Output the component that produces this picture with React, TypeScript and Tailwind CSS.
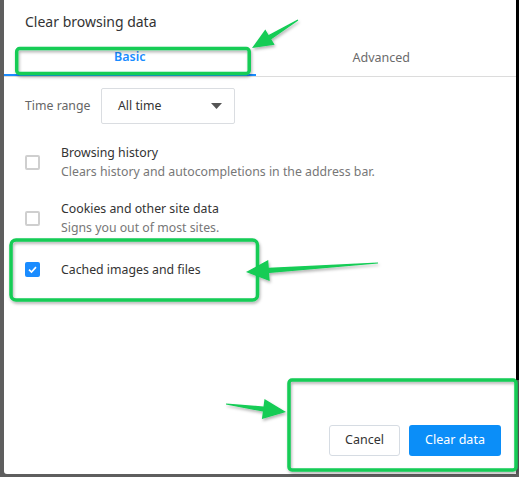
import React from 'react'

const FONT = { fontFamily: '"Noto Sans", "Open Sans", Arial, sans-serif' }
const GREEN = '#12cc55'

type Pt = [number, number]

// tapered arrow: thin tail widening into a triangle head
function arrowPoints(tail: Pt, tip: Pt, headLen: number, headHalf: number) {
  const dx = tip[0] - tail[0]
  const dy = tip[1] - tail[1]
  const len = Math.hypot(dx, dy)
  const ux = dx / len
  const uy = dy / len
  const nx = -uy
  const ny = ux
  const bx = tip[0] - ux * headLen
  const by = tip[1] - uy * headLen
  const pts: Pt[] = [
    [tail[0] + nx * 0.6, tail[1] + ny * 0.6],
    [bx + nx * 2.6, by + ny * 2.6],
    [bx + nx * headHalf, by + ny * headHalf],
    tip,
    [bx - nx * headHalf, by - ny * headHalf],
    [bx - nx * 2.6, by - ny * 2.6],
    [tail[0] - nx * 0.6, tail[1] - ny * 0.6],
  ]
  return pts.map((p) => `${p[0].toFixed(1)},${p[1].toFixed(1)}`).join(' ')
}

function Checkbox({ checked }: { checked?: boolean }) {
  if (checked) {
    return (
      <div className="w-[15px] h-[15px] rounded-[2px] bg-[#1a8cff] flex items-center justify-center shrink-0">
        <svg width="11" height="11" viewBox="0 0 12 12">
          <path d="M2.2 6.2 L4.9 8.8 L9.8 3.4" fill="none" stroke="white" strokeWidth="1.8" />
        </svg>
      </div>
    )
  }
  return <div className="w-[15px] h-[15px] rounded-[2px] border-2 border-[#cfcfcf] bg-white shrink-0" />
}

function Annotations() {
  return (
    <svg className="absolute inset-0 pointer-events-none" width="519" height="477" viewBox="0 0 519 477">
      <defs>
        <filter id="sh" x="-10%" y="-10%" width="120%" height="130%">
          <feDropShadow dx="1" dy="2" stdDeviation="1.4" floodColor="#000" floodOpacity="0.3" />
        </filter>
      </defs>
      <g filter="url(#sh)">
        <rect x="16.7" y="48.5" width="232.5" height="25" rx="3" fill="none" stroke={GREEN} strokeWidth="3.5" />
        <rect x="11" y="240" width="246.5" height="60" rx="5" fill="none" stroke={GREEN} strokeWidth="3.5" />
        <rect x="289" y="380" width="227" height="90" rx="3" fill="none" stroke={GREEN} strokeWidth="3.5" />
        <polygon points={arrowPoints([298, 20], [252, 48], 21, 9)} fill={GREEN} />
        <polygon points={arrowPoints([378, 263], [246, 272], 23, 10.5)} fill={GREEN} />
        <polygon points={arrowPoints([226, 404], [286, 412], 23, 10)} fill={GREEN} />
      </g>
    </svg>
  )
}

export default function App() {
  return (
    <div className="relative w-[519px] h-[477px] overflow-hidden bg-[#5e5e5e] flex" style={FONT}>
      {/* Dialog */}
      <div className="ml-[4px] mb-[3px] w-[512px] bg-white rounded-bl-[3px] flex flex-col">
        <h1 className="pt-[12px] pl-[21px] text-[14px] leading-[20px] text-[#333]">Clear browsing data</h1>

        {/* Tabs */}
        <div className="mt-[7px] border-b border-[#dcdcdc] w-[515px]">
          <div className="flex w-[503px]">
            <div className="flex-1 h-[37px] pt-px -mb-px border-b-2 border-[#1a8cff] flex items-center justify-center text-[12.5px] font-semibold text-[#1a8cff]">
              Basic
            </div>
            <div className="flex-1 h-[37px] pt-px flex items-center justify-center text-[12.5px] text-[#6b6b6b]">
              Advanced
            </div>
          </div>
        </div>

        {/* Time range */}
        <div className="mt-[11px] pl-[21px] flex items-center">
          <span className="w-[76px] shrink-0 text-[12.3px] text-[#666]">Time range</span>
          <div className="w-[134px] h-[36px] border border-[#dadde1] rounded-[2px] flex items-center justify-between pl-[16px] pr-[12px]">
            <span className="text-[12.3px] text-[#333]">All time</span>
            <svg width="11" height="6" viewBox="0 0 11 6">
              <path d="M0 0 H11 L5.5 6 Z" fill="#555" />
            </svg>
          </div>
        </div>

        {/* Options */}
        <div className="mt-[19px] pl-[21px] flex flex-col">
          <div className="h-[38px] flex items-center gap-[21px]">
            <Checkbox />
            <div className="text-[12.3px] leading-[19px]">
              <p className="text-[#333]">Browsing history</p>
              <p className="text-[#777]">Clears history and autocompletions in the address bar.</p>
            </div>
          </div>
          <div className="mt-[18px] h-[38px] flex items-center gap-[21px]">
            <Checkbox />
            <div className="text-[12.3px] leading-[19px]">
              <p className="text-[#333]">Cookies and other site data</p>
              <p className="text-[#777]">Signs you out of most sites.</p>
            </div>
          </div>
          <div className="mt-[13px] h-[38px] flex items-center gap-[21px]">
            <Checkbox checked />
            <p className="text-[12.3px] leading-[19px] text-[#333]">Cached images and files</p>
          </div>
        </div>

        <div className="flex-1" />

        {/* Buttons */}
        <div className="flex justify-end gap-[9px] pr-[15px] pb-[18px]">
          <button className="w-[71px] h-[31px] border border-[#d6dce3] rounded-[3px] bg-white text-[12.5px] text-[#333]">
            Cancel
          </button>
          <button className="w-[92px] h-[31px] rounded-[3px] bg-[#0b8ef8] text-[12.5px] text-white">
            Clear data
          </button>
        </div>
      </div>
      <div className="w-[3px] h-[380px] bg-black" />

      <Annotations />
    </div>
  )
}
